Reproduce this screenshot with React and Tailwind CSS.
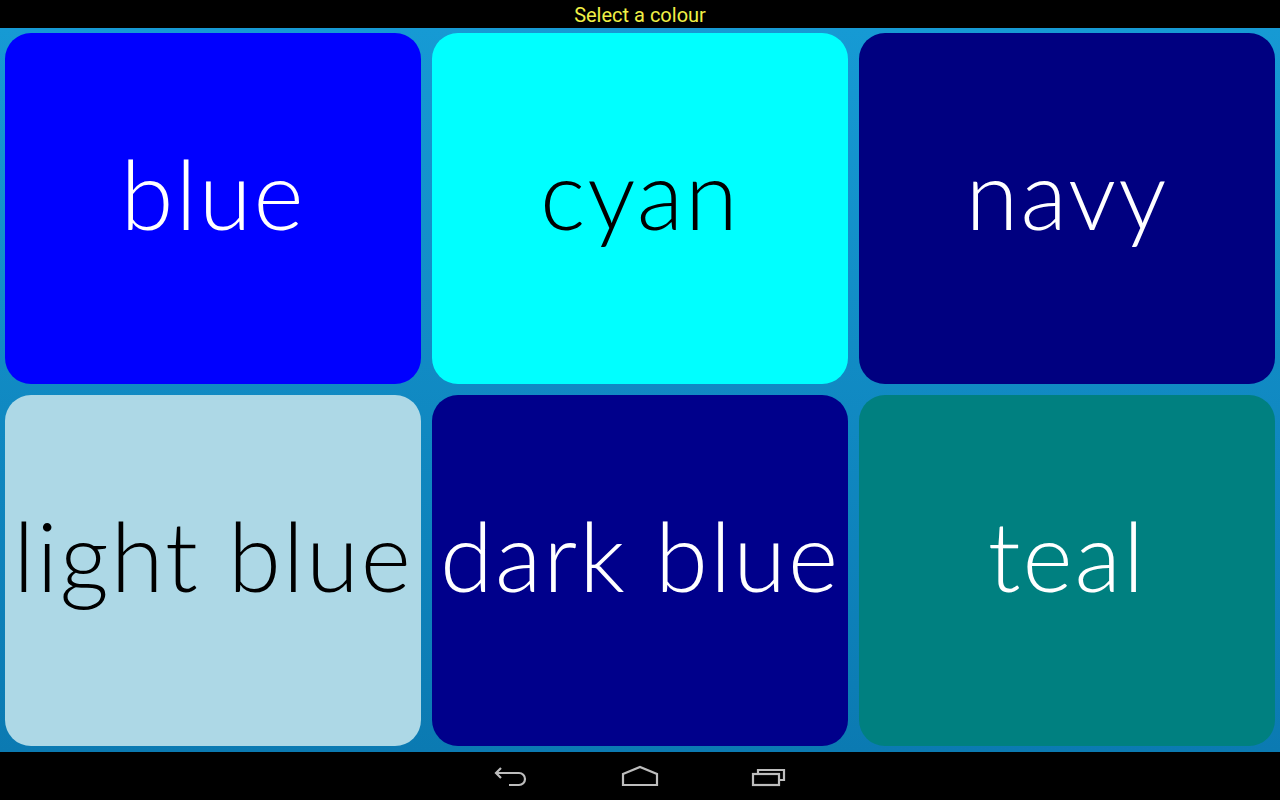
const colours = [
  { name: 'blue', bg: 'bg-[#0000ff]', text: 'text-white' },
  { name: 'cyan', bg: 'bg-[#00ffff]', text: 'text-black' },
  { name: 'navy', bg: 'bg-[#000080]', text: 'text-white' },
  { name: 'light blue', bg: 'bg-[#add8e6]', text: 'text-black' },
  { name: 'dark blue', bg: 'bg-[#00008b]', text: 'text-white' },
  { name: 'teal', bg: 'bg-[#008080]', text: 'text-white' },
];

function BackIcon() {
  return (
    <svg width="36" height="22" viewBox="0 0 36 22" fill="none" stroke="#bdbdbd" strokeWidth="2.2">
      <path d="M8 3 L3 8 L8 13" />
      <path d="M3 8 H26 A6 6 0 0 1 26 20 H16" />
    </svg>
  );
}

function HomeIcon() {
  return (
    <svg width="38" height="22" viewBox="0 0 38 22" fill="none" stroke="#bdbdbd" strokeWidth="2.2">
      <path d="M2 9 L19 2 L36 9 V20 H2 Z" />
    </svg>
  );
}

function RecentsIcon() {
  return (
    <svg width="36" height="22" viewBox="0 0 36 22" fill="none" stroke="#bdbdbd" strokeWidth="2.2">
      <rect x="2" y="9" width="26" height="11" />
      <path d="M7 9 V5 H33 V15 H28" />
    </svg>
  );
}

export default function App() {
  return (
    <div className="w-[1280px] h-[800px] flex flex-col bg-black" style={{ fontFamily: 'Lato, "Noto Sans", sans-serif' }}>
      <div className="h-[28px] flex items-center justify-center bg-black pt-[2px]">
        <span className="text-[20px] text-[#f0f046]" style={{ fontFamily: 'Roboto, sans-serif' }}>
          Select a colour
        </span>
      </div>
      <div className="flex-1 bg-gradient-to-b from-[#169ad4] to-[#0b7ab2] px-[5px] pt-[5px] pb-[6px] grid grid-cols-3 grid-rows-2 gap-x-[11px] gap-y-[11px]">
        {colours.map((c) => (
          <div
            key={c.name}
            className={`${c.bg} ${c.text} rounded-[26px] flex items-center justify-center overflow-hidden`}
          >
            <span className="text-[96px] font-light leading-none whitespace-nowrap tracking-[2px] -mt-[32px]">
              {c.name}
            </span>
          </div>
        ))}
      </div>
      <div className="h-[48px] flex items-center justify-center gap-[92px] bg-black">
        <BackIcon />
        <HomeIcon />
        <RecentsIcon />
      </div>
    </div>
  );
}
